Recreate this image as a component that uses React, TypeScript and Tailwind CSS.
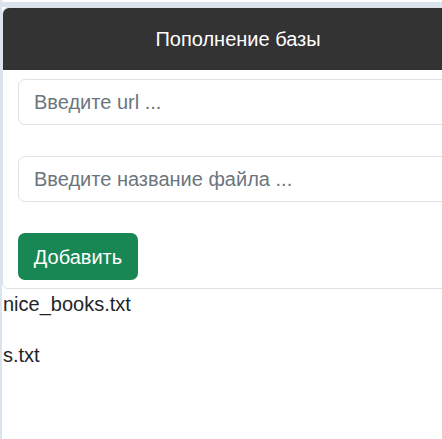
export default function App() {
  const files = ['nice_books.txt', 's.txt'];

  return (
    <div className="min-h-screen overflow-hidden bg-[#dbe3ec] pl-[2px] font-['Liberation_Sans',Arial,sans-serif] text-[#212529]">
      {/* previous card edge */}
      <div className="h-[2px] w-[480px] rounded-bl-md bg-white" />

      <div className="min-h-[440px] w-[480px] bg-white mt-[5px]">
        {/* Card */}
        <div className="w-[472px] rounded-md border border-[#dee2e6] bg-white">
          <div className="flex h-[62px] items-center justify-center rounded-t-md bg-[#333333] text-[20px] text-white">
            Пополнение базы
          </div>
          <div className="flex flex-col items-start gap-[31px] pl-[15px] pt-[9px] pb-[8px]">
            <input
              type="text"
              placeholder="Введите url ..."
              className="h-[46px] w-[440px] rounded-[7px] border border-[#dee2e6] bg-white px-[15px] text-[20px] placeholder:text-[#6c757d] focus:outline-none"
            />
            <input
              type="text"
              placeholder="Введите название файла ..."
              className="h-[46px] w-[440px] rounded-[7px] border border-[#dee2e6] bg-white px-[15px] text-[20px] placeholder:text-[#6c757d] focus:outline-none"
            />
            <button className="h-[47px] w-[120px] rounded-[7px] bg-[#198754] text-[20px] text-white">
              Добавить
            </button>
          </div>
        </div>

        {/* File list */}
        <div className="pl-[1px]">
          {files.map((f) => (
            <p key={f} className="mb-[21px] text-[20px] leading-[30px]">
              {f}
            </p>
          ))}
        </div>
      </div>
    </div>
  );
}
